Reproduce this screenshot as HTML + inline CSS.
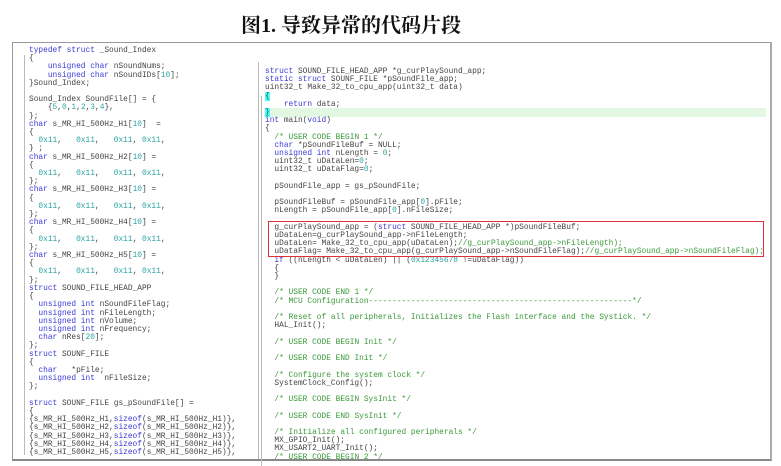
<!DOCTYPE html>
<html><head><meta charset="utf-8"><style>
body{margin:0;width:781px;height:466px;background:#fff;position:relative;overflow:hidden}
.t{position:absolute;left:240px;top:9px;width:222px;text-align:center;font:bold 20px "Liberation Serif","Noto Serif CJK SC","Noto Sans CJK SC",serif;color:#111;letter-spacing:0px}
.frame{position:absolute;left:12px;top:42px;width:757px;height:416px;border:1px solid #999;border-bottom:2px solid #888;border-right:2px solid #aaa}
.div{position:absolute;left:258px;top:62px;width:1px;height:397px;background:#bbb}
pre{position:absolute;margin:0;font:7.85px/8.2px "Liberation Mono",monospace;color:#444;white-space:pre}
.k{color:#3a3ad8}.n{color:#29a3a3}.c{color:#3a9a3a}
.g{position:absolute;width:1px;background:#bbb}
.hl{position:absolute;left:264px;top:108px;width:502px;height:9px;background:#e3f8e3}
.cy{background:#4ff}
.box{position:absolute;left:268px;top:221px;width:494px;height:34px;border:1.5px solid #e0303c}
</style></head><body>
<div class="t">图1. 导致异常的代码片段</div>
<div class="frame"></div>
<div class="div"></div>
<div class="g" style="left:24px;top:55px;height:400px"></div>
<div class="g" style="left:261px;top:96px;height:370px"></div>
<div class="hl"></div>
<pre style="left:29px;top:47px"><span class="k">typedef struct</span> _Sound_Index
{
    <span class="k">unsigned char</span> nSoundNums;
    <span class="k">unsigned char</span> nSoundIDs[<span class="n">10</span>];
}Sound_Index;

Sound_Index SoundFile[] = {
    {<span class="n">5</span>,<span class="n">0</span>,<span class="n">1</span>,<span class="n">2</span>,<span class="n">3</span>,<span class="n">4</span>},
};
<span class="k">char</span> s_MR_HI_500Hz_H1[<span class="n">10</span>]  =
{
  <span class="n">0x11</span>,   <span class="n">0x11</span>,   <span class="n">0x11</span>, <span class="n">0x11</span>,
} ;
<span class="k">char</span> s_MR_HI_500Hz_H2[<span class="n">10</span>] =
{
  <span class="n">0x11</span>,   <span class="n">0x11</span>,   <span class="n">0x11</span>, <span class="n">0x11</span>,
};
<span class="k">char</span> s_MR_HI_500Hz_H3[<span class="n">10</span>] =
{
  <span class="n">0x11</span>,   <span class="n">0x11</span>,   <span class="n">0x11</span>, <span class="n">0x11</span>,
};
<span class="k">char</span> s_MR_HI_500Hz_H4[<span class="n">10</span>] =
{
  <span class="n">0x11</span>,   <span class="n">0x11</span>,   <span class="n">0x11</span>, <span class="n">0x11</span>,
};
<span class="k">char</span> s_MR_HI_500Hz_H5[<span class="n">10</span>] =
{
  <span class="n">0x11</span>,   <span class="n">0x11</span>,   <span class="n">0x11</span>, <span class="n">0x11</span>,
};
<span class="k">struct</span> SOUND_FILE_HEAD_APP
{
  <span class="k">unsigned int</span> nSoundFileFlag;
  <span class="k">unsigned int</span> nFileLength;
  <span class="k">unsigned int</span> nVolume;
  <span class="k">unsigned int</span> nFrequency;
  <span class="k">char</span> nRes[<span class="n">20</span>];
};
<span class="k">struct</span> SOUNF_FILE
{
  <span class="k">char</span>   *pFile;
  <span class="k">unsigned int</span>  nFileSize;
};

<span class="k">struct</span> SOUNF_FILE gs_pSoundFile[] =
{
{s_MR_HI_500Hz_H1,<span class="k">sizeof</span>(s_MR_HI_500Hz_H1)},
{s_MR_HI_500Hz_H2,<span class="k">sizeof</span>(s_MR_HI_500Hz_H2)},
{s_MR_HI_500Hz_H3,<span class="k">sizeof</span>(s_MR_HI_500Hz_H3)},
{s_MR_HI_500Hz_H4,<span class="k">sizeof</span>(s_MR_HI_500Hz_H4)},
{s_MR_HI_500Hz_H5,<span class="k">sizeof</span>(s_MR_HI_500Hz_H5)},</pre>
<pre style="left:265px;top:68px"><span class="k">struct</span> SOUND_FILE_HEAD_APP *g_curPlaySound_app;
<span class="k">static struct</span> SOUNF_FILE *pSoundFile_app;
uint32_t Make_32_to_cpu_app(uint32_t data)
<span class="cy">{</span>
    <span class="k">return</span> data;
<span class="cy">}</span>
<span class="k">int</span> main(<span class="k">void</span>)
{
  <span class="c">/* USER CODE BEGIN 1 */</span>
  <span class="k">char</span> *pSoundFileBuf = NULL;
  <span class="k">unsigned int</span> nLength = <span class="n">0</span>;
  uint32_t uDataLen=<span class="n">0</span>;
  uint32_t uDataFlag=<span class="n">0</span>;

  pSoundFile_app = gs_pSoundFile;

  pSoundFileBuf = pSoundFile_app[<span class="n">0</span>].pFile;
  nLength = pSoundFile_app[<span class="n">0</span>].nFileSize;

  g_curPlaySound_app = (<span class="k">struct</span> SOUND_FILE_HEAD_APP *)pSoundFileBuf;
  uDataLen=g_curPlaySound_app-&gt;nFileLength;
  uDataLen= Make_32_to_cpu_app(uDataLen);<span class="c">//g_curPlaySound_app-&gt;nFileLength);</span>
  uDataFlag= Make_32_to_cpu_app(g_curPlaySound_app-&gt;nSoundFileFlag);<span class="c">//g_curPlaySound_app-&gt;nSoundFileFlag);</span>
  <span class="k">if</span> ((nLength &lt; uDataLen) || (<span class="n">0x12345678</span> !=uDataFlag))
  {
  }

  <span class="c">/* USER CODE END 1 */</span>
  <span class="c">/* MCU Configuration--------------------------------------------------------*/</span>

  <span class="c">/* Reset of all peripherals, Initializes the Flash interface and the Systick. */</span>
  HAL_Init();

  <span class="c">/* USER CODE BEGIN Init */</span>

  <span class="c">/* USER CODE END Init */</span>

  <span class="c">/* Configure the system clock */</span>
  SystemClock_Config();

  <span class="c">/* USER CODE BEGIN SysInit */</span>

  <span class="c">/* USER CODE END SysInit */</span>

  <span class="c">/* Initialize all configured peripherals */</span>
  MX_GPIO_Init();
  MX_USART2_UART_Init();
  <span class="c">/* USER CODE BEGIN 2 */</span></pre>
<div class="box"></div>
</body></html>
